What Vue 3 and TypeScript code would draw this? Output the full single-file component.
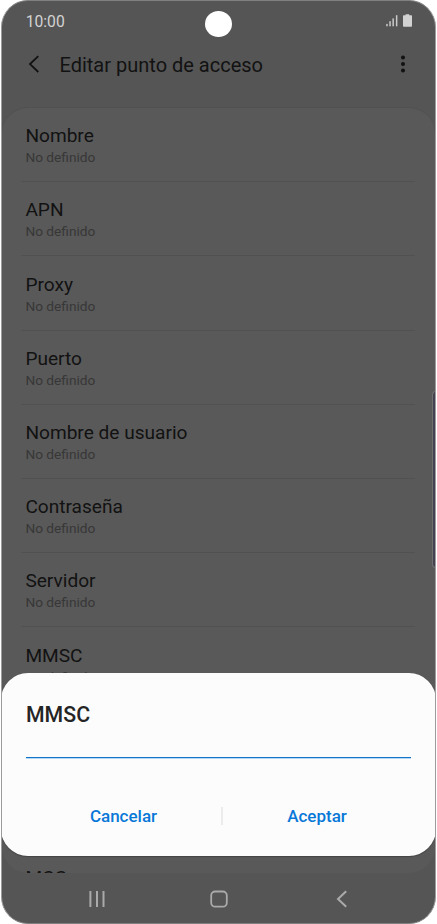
<script setup lang="ts">
interface Field {
  name: string
  value: string
}

const names: string[] = ['Nombre', 'APN', 'Proxy', 'Puerto', 'Nombre de usuario', 'Contraseña', 'Servidor', 'MMSC']
const fields: Field[] = names.map((name) => ({ name, value: 'No definido' }))
</script>

<template>
  <div class="phone">
    <header class="status">
      <span class="time">10:00</span>
      <svg class="indicators" width="28" height="16" viewBox="0 0 28 16">
        <g fill="#c9c9c9">
          <rect x="0.2" y="10.9" width="1.5" height="2.4" />
          <rect x="3.3" y="8.2" width="1.5" height="5.1" />
          <rect x="6.4" y="5.4" width="1.5" height="7.9" />
          <rect x="9.9" y="2.2" width="1.5" height="11.1" />
        </g>
        <path d="M19.6 1.2h3.6v1h2.1q.7 0 .7.7v10q0 .8-.8.8h-7.4q-.8 0-.8-.8v-10q0-.7.7-.7h1.9z" fill="#d2d2d2" />
      </svg>
    </header>
    <div class="camera"></div>
    <div class="appbar">
      <svg class="back" width="12" height="18" viewBox="0 0 12 18">
        <path d="M10.3 1.2 2 9.1l8.3 7.9" fill="none" stroke="#111" stroke-width="1.8" />
      </svg>
      <h1>Editar punto de acceso</h1>
      <svg class="more" width="6" height="18" viewBox="0 0 6 18" fill="#111">
        <circle cx="3" cy="2.5" r="2" /><circle cx="3" cy="9" r="2" /><circle cx="3" cy="15.5" r="2" />
      </svg>
    </div>
    <main class="list">
      <div v-for="field in fields" :key="field.name" class="row">
        <div class="name">{{ field.name }}</div>
        <div class="value">{{ field.value }}</div>
      </div>
      <div class="row last"><div class="name">MCC</div></div>
    </main>
    <nav class="nav">
      <svg width="18" height="18" viewBox="0 0 18 18">
        <path d="M2.4 1v16M9 1v16M15.5 1v16" fill="none" stroke="#aaa" stroke-width="2" />
      </svg>
      <svg class="home" width="18" height="18" viewBox="0 0 18 18">
        <rect x="1.2" y="1.5" width="15.6" height="15.2" rx="4" fill="none" stroke="#aaa" stroke-width="1.8" />
      </svg>
      <svg width="12" height="18" viewBox="0 0 12 18">
        <path d="M10.2 1.3 2 9l8.2 7.7" fill="none" stroke="#aaa" stroke-width="2" />
      </svg>
    </nav>
    <div class="edge"></div>
    <section class="dialog">
      <h2>MMSC</h2>
      <div class="field"></div>
      <div class="actions">
        <button type="button" class="cancel">Cancelar</button>
        <span class="sep"></span>
        <button type="button" class="accept">Aceptar</button>
      </div>
    </section>
  </div>
</template>

<style>
body {
  background: #fff;
}
</style>

<style scoped>
* {
  box-sizing: border-box;
}
.phone {
  position: relative;
  display: flex;
  flex-direction: column;
  width: 435px;
  height: 924px;
  margin: 0 auto;
  overflow: hidden;
  border: 1px solid #808080;
  border-left-color: #9c9c9c;
  border-right-color: #9c9c9c;
  border-radius: 27px;
  background: #555;
  font-family: Roboto, sans-serif;
  color: #121212;
}
.status {
  display: flex;
  justify-content: space-between;
  align-items: center;
  height: 42px;
  padding: 0 21.5px 2px 23.7px;
}
.time {
  font-size: 15.7px;
  color: #d2d2d2;
}
.indicators {
  margin-top: -1px;
}
.camera {
  position: absolute;
  left: 203px;
  top: 10px;
  width: 27px;
  height: 26px;
  border-radius: 50%;
  background: #fff;
}
.appbar {
  display: flex;
  align-items: center;
  height: 43px;
  padding: 0 29px 0 25.5px;
}
.back,
.more {
  margin-bottom: 1px;
}
.appbar h1 {
  flex: 1;
  margin: 1px 0 0 20px;
  font-size: 20px;
  font-weight: 400;
  line-height: 24px;
}
.list {
  flex: none;
  height: 766px;
  margin-top: 21px;
  overflow: hidden;
  border-top: 1px solid #515151;
  border-radius: 26px;
  background: #595959;
}
.row {
  height: 74.2px;
  margin: 0 20px 0 19px;
  padding: 16.3px 4px 0 4.4px;
  border-bottom: 1px solid #515151;
}
.last {
  margin-top: 148.4px;
}
.name {
  font-size: 19.1px;
  line-height: 23px;
}
.value {
  font-size: 13.7px;
  line-height: 20px;
  color: #373737;
}
.nav {
  display: flex;
  flex: none;
  justify-content: space-between;
  align-items: center;
  height: 50px;
  padding: 2px 87px 0 86px;
}
.home {
  margin-right: 4px;
}
.edge {
  position: absolute;
  right: -1px;
  top: 390px;
  width: 4px;
  height: 177px;
  border: 1px solid #707070;
  border-right-color: #8a8990;
  border-radius: 4px 0 0 4px;
  background: #434050;
}
.dialog {
  position: absolute;
  left: -1px;
  top: 672.4px;
  width: 435px;
  height: 182.2px;
  padding: 29px 25px 0;
  border-radius: 27px;
  background: #fcfcfc;
  box-shadow: 0 1px 1px #444;
}
.dialog h2 {
  margin: 0;
  font-size: 21.3px;
  font-weight: 500;
  line-height: 25px;
  color: #252525;
}
.field {
  height: 31px;
  border-bottom: 1px solid #1474ca;
  box-shadow: 0 1px #b5d8f5;
}
.actions {
  display: grid;
  grid-template-columns: 195px 2px 188px;
  align-items: center;
  height: 115px;
}
.actions button {
  padding: 0;
  border: 0;
  background: none;
  font: 500 17px/20px Roboto, sans-serif;
  color: #0878d8;
}
.sep {
  height: 18px;
  background: #ececec;
}
</style>
